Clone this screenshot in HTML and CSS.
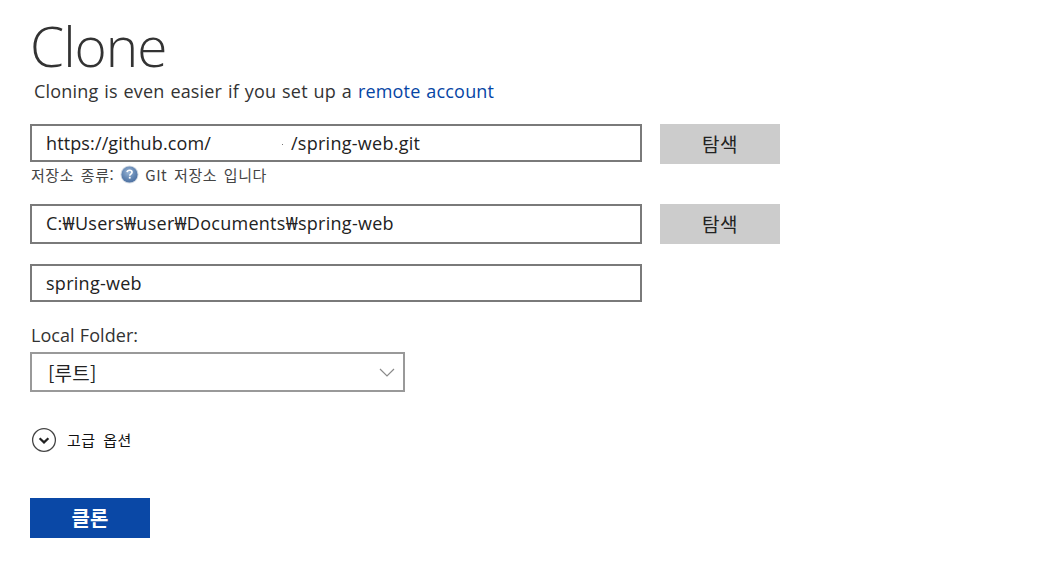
FILE: index.html
```html
<!DOCTYPE html>
<html lang="ko">
<head>
<meta charset="utf-8">
<title>Clone</title>
<link rel="stylesheet" href="styles.css">
</head>
<body>
<main class="page">
  <h1 class="title">Clone</h1>
  <p class="subtitle">Cloning is even easier if you set up a <a class="link" href="#">remote account</a></p>

  <div class="row row-url">
    <div class="field field-38"><span class="url-host">https://github.com/</span><span class="redact"><i class="speck"></i></span><span>/spring-web.git</span></div>
    <button class="btn-browse" type="button"><span class="btn-label">탐색</span></button>
  </div>
  <div class="repo-type">
    <span>저장소 종류:</span>
    <svg class="help" width="19" height="19" viewBox="0 0 20 20" aria-hidden="true">
      <defs>
        <radialGradient id="helpFill" cx="45%" cy="35%" r="65%">
          <stop offset="0" stop-color="#9db8d8"/>
          <stop offset="0.6" stop-color="#6689b5"/>
          <stop offset="1" stop-color="#4d71a2"/>
        </radialGradient>
      </defs>
      <circle cx="10" cy="10" r="9.5" fill="#d3dae3"/>
      <circle cx="10" cy="10" r="8.5" fill="url(#helpFill)"/>
      <path d="M7.4 7.6c.2-1.4 1.3-2.1 2.7-2.1 1.5 0 2.6.8 2.6 2.1 0 1.9-2.4 1.9-2.4 3.6" fill="none" stroke="#fff" stroke-width="1.7"/>
      <rect x="9.3" y="12.4" width="1.9" height="1.9" fill="#fff"/>
    </svg>
    <span>GIt 저장소 입니다</span>
  </div>

  <div class="row row-path">
    <div class="field field-40"><span class="field-text-up">C:₩Users₩user₩Documents₩spring-web</span></div>
    <button class="btn-browse" type="button"><span class="btn-label">탐색</span></button>
  </div>

  <div class="row row-name">
    <div class="field field-38">spring-web</div>
  </div>

  <div class="folder-label">Local Folder:</div>
  <div class="select">
    <span>[루트]</span>
    <svg class="caret" width="16" height="9" viewBox="0 0 16 9" aria-hidden="true"><path d="M1 1l7 7 7-7" fill="none" stroke="#8a8a8a" stroke-width="1.2"/></svg>
  </div>

  <div class="advanced">
    <svg class="adv-icon" width="26" height="26" viewBox="0 0 26 26" aria-hidden="true">
      <circle cx="13" cy="13" r="11.4" fill="none" stroke="#444" stroke-width="1.3"/>
      <path d="M8.6 11.2l4.4 4.2 4.4-4.2" fill="none" stroke="#222" stroke-width="2.2"/>
    </svg>
    <span class="adv-text">고급 옵션</span>
  </div>

  <button class="btn-clone" type="button"><span class="btn-label">클론</span></button>
</main>
</body>
</html>
```
FILE: styles.css
```css
* { box-sizing: border-box; }
html, body { margin: 0; background: #fff; }
body {
  font-family: "Open Sans", "Noto Sans", "Noto Sans CJK KR", sans-serif;
  color: #333;
  overflow: hidden;
}
.page { padding: 0 30px; height: 564px; }
.title {
  margin: 0;
  padding-top: 15px;
  font-size: 55px;
  font-weight: 300;
  line-height: 61px;
  height: 77px;
  color: #333;
  letter-spacing: -1px;
}
.subtitle {
  margin: 0;
  padding-left: 4px;
  height: 47px;
  font-size: 18px;
  line-height: 28px;
  color: #333;
  letter-spacing: 0.18px;
  word-spacing: 1px;
}
.link { color: #0645a5; text-decoration: none; }
.row { display: flex; gap: 18px; align-items: flex-start; }
.field {
  width: 612px;
  border: 2px solid #7a7a7a;
  padding: 0 14px;
  font-size: 18px;
  letter-spacing: 0.27px;
  color: #222;
  display: flex;
  align-items: center;
  white-space: nowrap;
}
.field-38 { height: 38px; }
.field-40 { height: 40px; padding-bottom: 2px; }
.url-host { letter-spacing: 0.12px; }
.redact { display: block; position: relative; width: 80px; height: 20px; }
.speck { position: absolute; left: 71px; top: 11px; width: 1px; height: 1px; background: #777; }
.btn-browse {
  width: 120px;
  height: 40px;
  border: 0;
  padding: 0 0 2px;
  background: #ccc;
  color: #222;
  font: 19px "Noto Sans CJK KR", sans-serif;
  letter-spacing: 0.5px;
}
.repo-type {
  display: flex;
  align-items: center;
  gap: 6px;
  height: 26px;
  margin-top: -3px;
  margin-bottom: 17px;
  padding-left: 1px;
  font-size: 15px;
  font-family: "Noto Sans CJK KR", sans-serif;
  letter-spacing: 0.55px;
  word-spacing: 2px;
  color: #444;
}
.help { flex: none; }
.row-path { margin-bottom: 20px; }
.row-name { margin-bottom: 20px; }
.folder-label {
  height: 30px;
  padding-left: 1px;
  font-size: 18px;
  line-height: 26px;
  letter-spacing: 0.05px;
  word-spacing: 0.5px;
  color: #333;
}
.select {
  width: 375px;
  height: 40px;
  border: 2px solid #999;
  padding: 0 8px 0 16px;
  display: flex;
  align-items: center;
  justify-content: space-between;
  font-size: 19px;
  letter-spacing: 0.2px;
  color: #222;
  font-family: "Noto Sans CJK KR", sans-serif;
}
.advanced {
  display: flex;
  align-items: center;
  gap: 10px;
  height: 30px;
  margin-top: 33px;
  padding-left: 1px;
  font-size: 15px;
  font-family: "Noto Sans CJK KR", sans-serif;
  letter-spacing: 0.5px;
  word-spacing: 3px;
  color: #111;
}
.adv-text { padding-bottom: 2px; }
.adv-icon { flex: none; }
.btn-clone {
  display: block;
  width: 120px;
  height: 40px;
  margin-top: 43px;
  border: 0;
  padding: 0 0 2px;
  background: #0a48a6;
  color: #fff;
  font: 700 20px "Noto Sans CJK KR", sans-serif;
}
```
